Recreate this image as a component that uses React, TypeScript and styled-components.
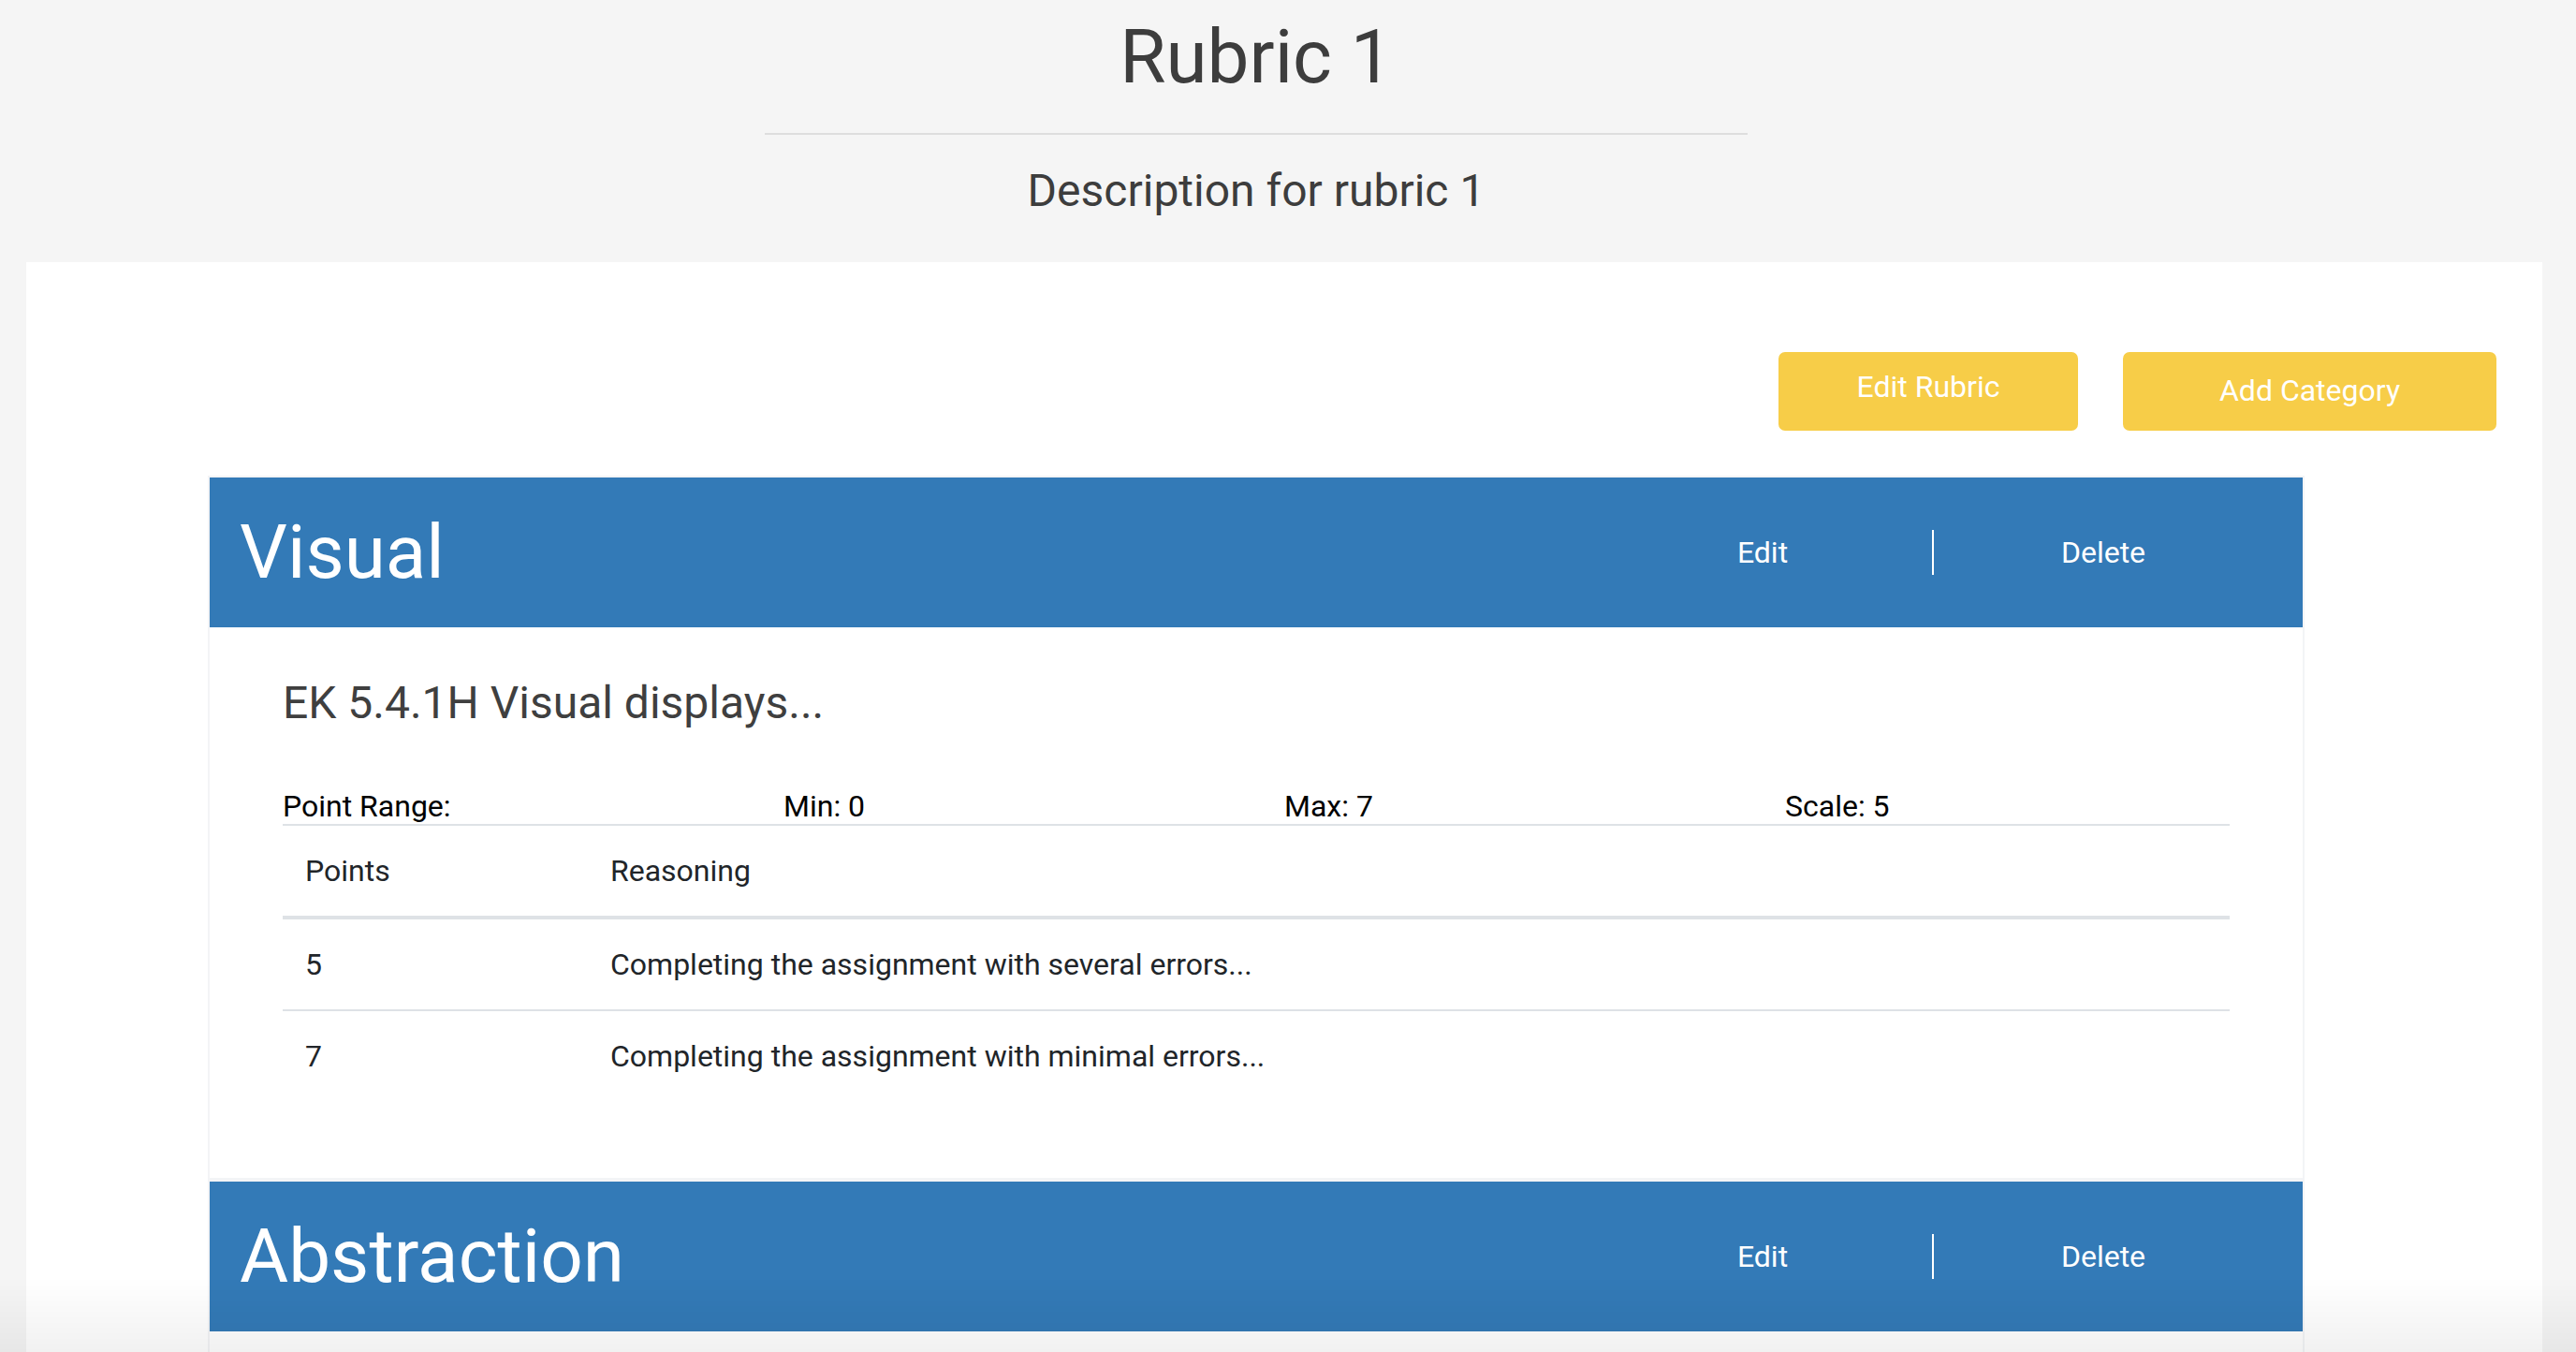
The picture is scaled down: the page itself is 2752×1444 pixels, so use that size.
import React from "react";
import styled, { createGlobalStyle } from "styled-components";

const GlobalStyle = createGlobalStyle`
  * { box-sizing: border-box; }
  html, body { margin: 0; padding: 0; }
  body {
    background: #f5f5f5;
    font-family: Roboto, "Liberation Sans", Arial, sans-serif;
    color: #404040;
  }
`;

const Page = styled.div`
  min-height: 100vh;
  padding: 0 36px 0 28px;
`;

const Heading = styled.header`
  padding: 13px 60px 47px 0;
  text-align: center;
`;

const Title = styled.h1`
  margin: 0;
  font-size: 80px;
  font-weight: 400;
  line-height: 96px;
  color: #3d3d3d;
`;

const Rule = styled.hr`
  width: 1050px;
  margin: 33px auto 31px;
  border: 0;
  border-top: 2px solid #dedede;
`;

const Subtitle = styled.p`
  margin: 0;
  font-size: 48px;
  line-height: 57.6px;
  color: #3d3d3d;
`;

const Panel = styled.main`
  background: #ffffff;
  padding: 96px 0 80px;
`;

const Toolbar = styled.div`
  display: flex;
  justify-content: flex-end;
  gap: 48px;
  padding-right: 49px;
  margin-bottom: 48px;
`;

const YellowButton = styled.button<{ $width: number; $lift: number }>`
  width: ${(p) => p.$width}px;
  height: 84px;
  border: 0;
  border-radius: 7px;
  background: #f7cd48;
  color: #ffffff;
  font-family: Roboto, "Liberation Sans", Arial, sans-serif;
  font-size: 32px;
  line-height: 48px;
  padding: 0 0 ${(p) => p.$lift}px;
  cursor: pointer;
`;

const CardList = styled.div`
  width: 2240px;
  margin-left: 194px;
  display: flex;
  flex-direction: column;
`;

const Card = styled.section`
  border: 2px solid #f3f4f6;
  background: #ffffff;
`;

const CardHeader = styled.div`
  height: 160px;
  background: #337ab7;
  display: flex;
  align-items: center;
  padding: 0 32px;
`;

const CardTitle = styled.h2`
  flex: 1;
  margin: 0;
  font-size: 80px;
  font-weight: 400;
  line-height: 96px;
  color: #ffffff;
`;

const Actions = styled.div`
  display: flex;
  align-items: center;
`;

const ActionButton = styled.button`
  width: 362px;
  background: transparent;
  border: 0;
  color: #ffffff;
  font-family: Roboto, "Liberation Sans", Arial, sans-serif;
  font-size: 32px;
  line-height: 48px;
  padding: 0;
  cursor: pointer;
`;

const Divider = styled.span`
  width: 2px;
  height: 48px;
  background: #ffffff;
`;

const CardBody = styled.div<{ $empty?: boolean }>`
  padding: ${(p) => (p.$empty ? "40px 78px" : "52px 78px 82px")};
`;

const Criterion = styled.h3`
  margin: 0 0 64px;
  font-size: 48px;
  font-weight: 400;
  line-height: 57.6px;
  color: #3f3f3f;
`;

const RangeRow = styled.div`
  display: grid;
  grid-template-columns: repeat(4, 535px);
  font-size: 32px;
  line-height: 37px;
  color: #000000;
`;

const Table = styled.table`
  width: 2080px;
  border-collapse: collapse;
  font-size: 32px;
  line-height: 48px;
  color: #212529;
`;

const HeadCell = styled.th<{ $width?: number }>`
  text-align: left;
  font-weight: 400;
  padding: 24px;
  border-top: 2px solid #dee2e6;
  border-bottom: 4px solid #dee2e6;
  ${(p) => (p.$width ? `width: ${p.$width}px;` : "")}
`;

const Cell = styled.td`
  padding: 24px;
  border-top: 2px solid #dee2e6;
`;

const BottomFade = styled.div`
  position: fixed;
  left: 0;
  right: 0;
  bottom: 0;
  height: 80px;
  pointer-events: none;
  background: linear-gradient(to bottom, rgba(0, 0, 0, 0), rgba(0, 0, 0, 0.055));
`;

type Level = { points: number; reasoning: string };
type Category = {
  name: string;
  criterion?: string;
  min?: number;
  max?: number;
  scale?: number;
  levels?: Level[];
};

const categories: Category[] = [
  {
    name: "Visual",
    criterion: "EK 5.4.1H Visual displays...",
    min: 0,
    max: 7,
    scale: 5,
    levels: [
      { points: 5, reasoning: "Completing the assignment with several errors..." },
      { points: 7, reasoning: "Completing the assignment with minimal errors..." },
    ],
  },
  { name: "Abstraction" },
];

function CategoryCard({ cat }: { cat: Category }) {
  return (
    <Card>
      <CardHeader>
        <CardTitle>{cat.name}</CardTitle>
        <Actions>
          <ActionButton>Edit</ActionButton>
          <Divider />
          <ActionButton>Delete</ActionButton>
        </Actions>
      </CardHeader>
      {cat.criterion ? (
        <CardBody>
          <Criterion>{cat.criterion}</Criterion>
          <RangeRow>
            <span>Point Range:</span>
            <span>Min: {cat.min}</span>
            <span>Max: {cat.max}</span>
            <span>Scale: {cat.scale}</span>
          </RangeRow>
          <Table>
            <thead>
              <tr>
                <HeadCell $width={326}>Points</HeadCell>
                <HeadCell>Reasoning</HeadCell>
              </tr>
            </thead>
            <tbody>
              {cat.levels?.map((l) => (
                <tr key={l.points}>
                  <Cell>{l.points}</Cell>
                  <Cell>{l.reasoning}</Cell>
                </tr>
              ))}
            </tbody>
          </Table>
        </CardBody>
      ) : (
        <CardBody $empty />
      )}
    </Card>
  );
}

export default function App() {
  return (
    <>
      <GlobalStyle />
      <Page>
        <Heading>
          <Title>Rubric 1</Title>
          <Rule />
          <Subtitle>Description for rubric 1</Subtitle>
        </Heading>
        <Panel>
          <Toolbar>
            <YellowButton $width={320} $lift={10}>Edit Rubric</YellowButton>
            <YellowButton $width={399} $lift={2}>Add Category</YellowButton>
          </Toolbar>
          <CardList>
            {categories.map((c) => (
              <CategoryCard key={c.name} cat={c} />
            ))}
          </CardList>
        </Panel>
      </Page>
      <BottomFade />
    </>
  );
}
